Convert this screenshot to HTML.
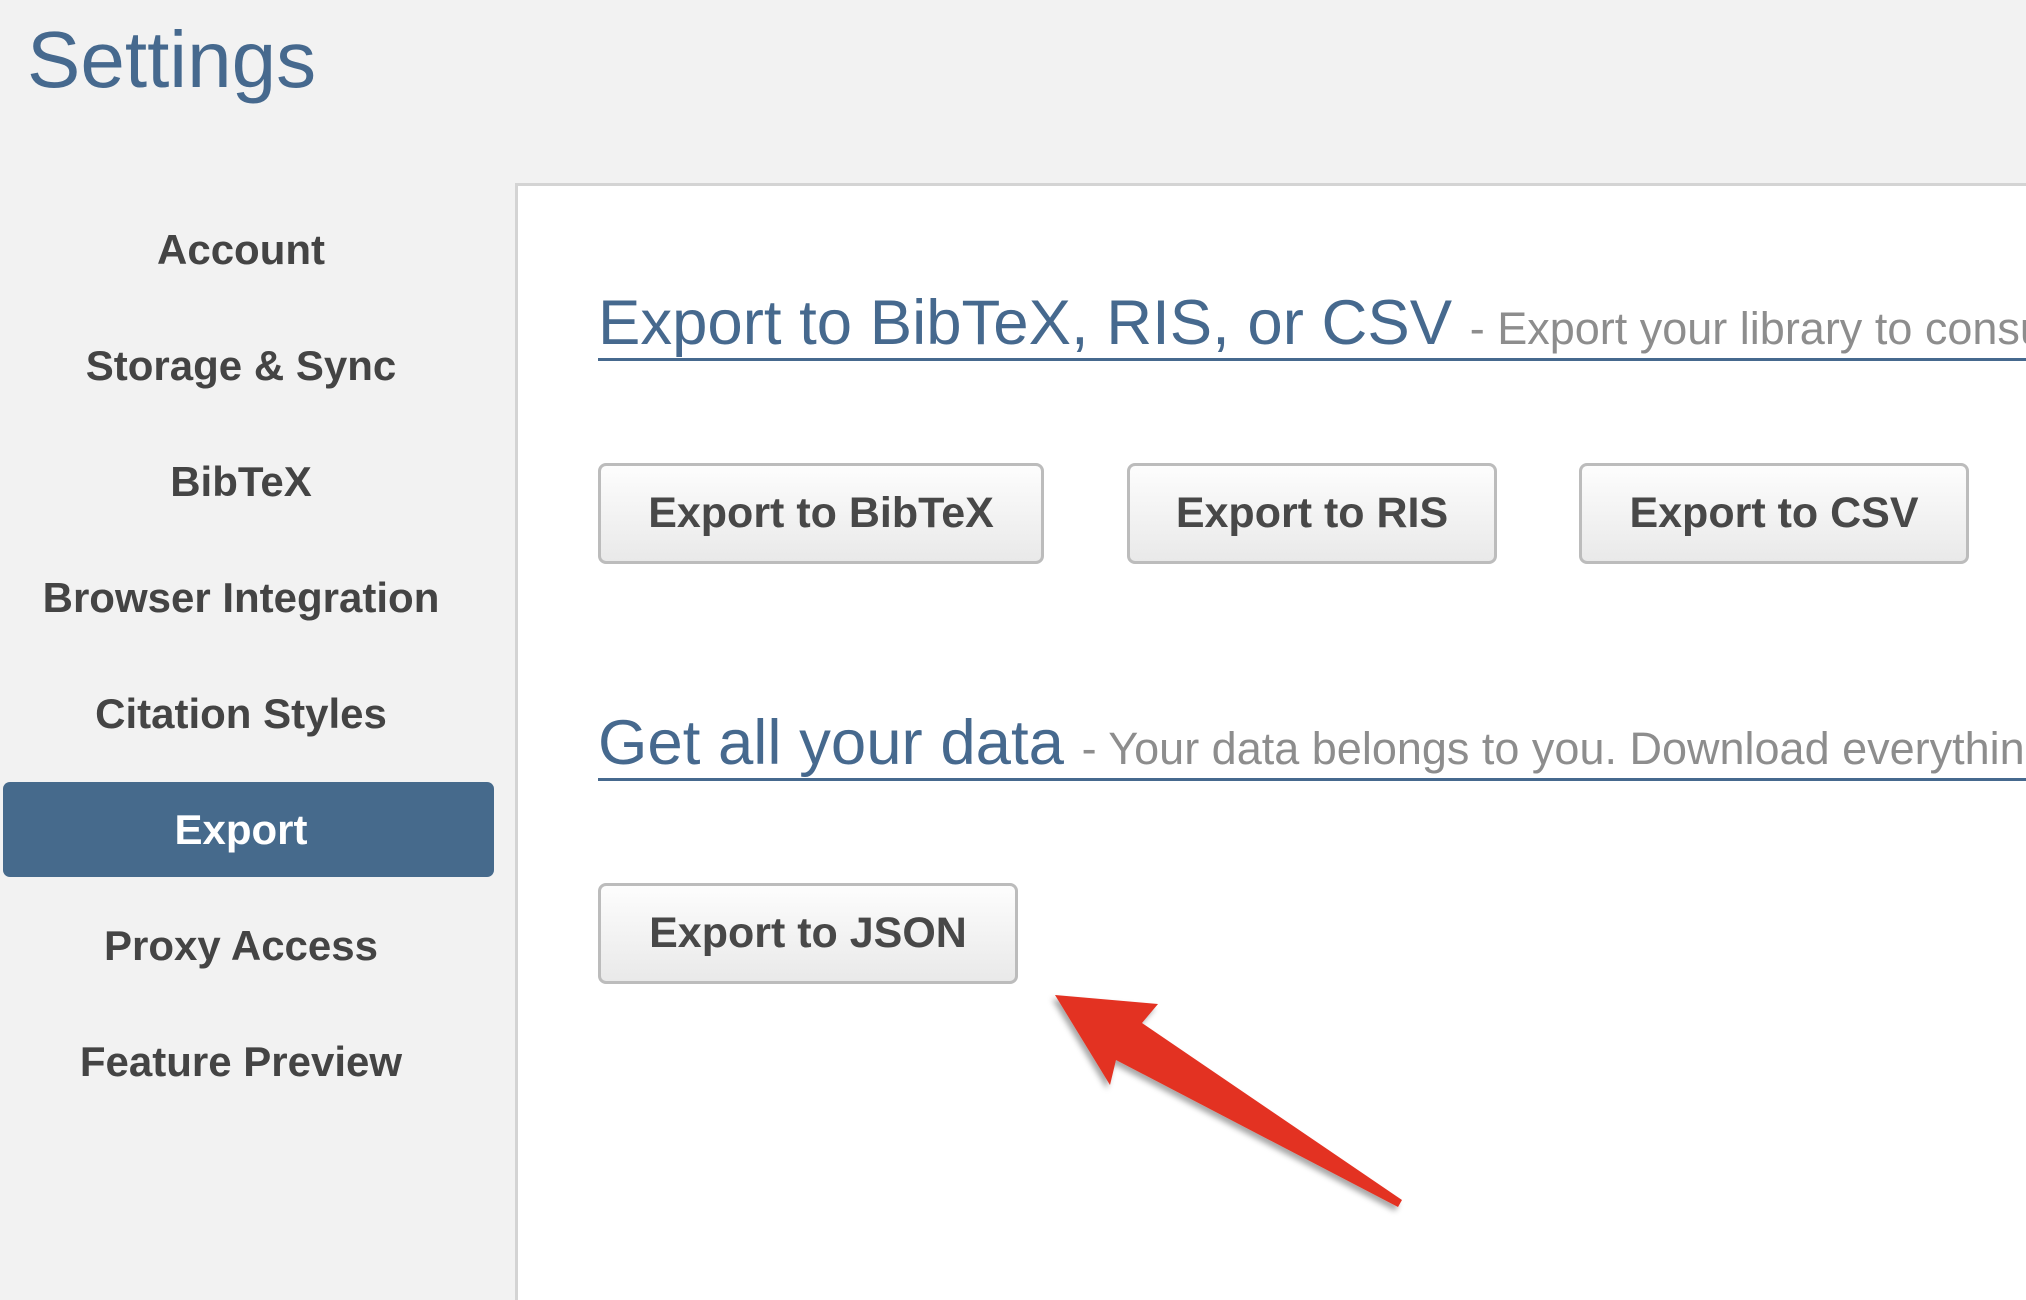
<!DOCTYPE html>
<html><head><meta charset="utf-8"><style>
html,body{margin:0;padding:0;overflow:hidden;width:2026px;height:1300px}
body{background:#f2f2f2;position:relative;font-family:"Liberation Sans",Arial,sans-serif}
.title{position:absolute;left:27px;top:20px;font-size:80px;color:#46698e;line-height:1}
.nav{position:absolute;left:0;width:482px;text-align:center;font-weight:bold;font-size:42px;color:#444;line-height:1}
.active{position:absolute;left:3px;top:782px;width:491px;height:95px;background:#466a8c;border-radius:7px}
.panel{position:absolute;left:515px;top:183px;width:1511px;height:1117px;background:#fff;border-left:3px solid #d4d4d4;border-top:3px solid #d4d4d4;box-sizing:border-box;overflow:hidden}
.h{position:absolute;left:80px;white-space:nowrap;color:#46698e;font-size:63.5px;line-height:1}
.h span{color:#8d8d8d;font-size:45px}
.ul{position:absolute;left:80px;right:0;height:3px;background:#46698e}
.btn{position:absolute;height:101px;box-sizing:border-box;border:3px solid #bcbcbc;border-radius:8px;background:linear-gradient(#fdfdfd,#e9e9e9);font-weight:bold;font-size:43px;color:#484848;display:flex;align-items:center;justify-content:center}
</style></head><body>
<div class="title">Settings</div>
<div class="active"></div>
<div class="nav" style="top:229px">Account</div>
<div class="nav" style="top:345px">Storage &amp; Sync</div>
<div class="nav" style="top:461px">BibTeX</div>
<div class="nav" style="top:577px">Browser Integration</div>
<div class="nav" style="top:693px">Citation Styles</div>
<div class="nav" style="top:809px;color:#fff">Export</div>
<div class="nav" style="top:925px">Proxy Access</div>
<div class="nav" style="top:1041px">Feature Preview</div>
<div class="panel">
<div class="h" style="top:106px">Export to BibTeX, RIS, or CSV <span>- Export your library to consume elsewhere</span></div>
<div class="ul" style="top:172px"></div>
<div class="h" style="top:526px">Get all your data <span>- Your data belongs to you. Download everything</span></div>
<div class="ul" style="top:592px"></div>
</div>
<div class="btn" style="left:598px;top:463px;width:446px">Export to BibTeX</div>
<div class="btn" style="left:1127px;top:463px;width:370px">Export to RIS</div>
<div class="btn" style="left:1579px;top:463px;width:390px">Export to CSV</div>
<div class="btn" style="left:598px;top:883px;width:420px">Export to JSON</div>
<svg style="position:absolute;left:0;top:0" width="2026" height="1300">
<defs><filter id="s"><feDropShadow dx="-3" dy="4" stdDeviation="3" flood-opacity="0.35"/></filter></defs>
<polygon filter="url(#s)" fill="#e33224" points="1055,995 1158,1004 1142,1023 1402,1200 1398,1207 1116,1060 1110,1085"/>
</svg>
</body></html>
